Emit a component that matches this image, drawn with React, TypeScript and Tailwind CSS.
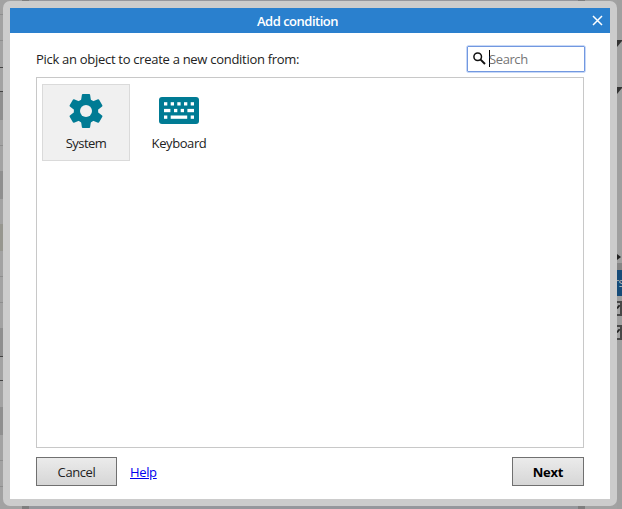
const leftRows: [number, string][] = [
  [14, "bg-[#a2a2a2]"], [1, "bg-[#8e8e8e]"], [25, "bg-[#a2a2a2]"], [1, "bg-[#8e8e8e]"],
  [26, "bg-[#a2a2a2]"], [1, "bg-[#444444]"], [23, "bg-[#a2a2a2]"], [1, "bg-[#444444]"],
  [28, "bg-[#8f8f8f]"], [25, "bg-[#a2a2a2]"], [1, "bg-[#8e8e8e]"], [25, "bg-[#a2a2a2]"],
  [28, "bg-[#8f8f8f]"], [25, "bg-[#a2a2a2]"], [27, "bg-[#96968f]"], [25, "bg-[#a2a2a2]"],
  [1, "bg-[#8e8e8e]"], [25, "bg-[#a2a2a2]"], [1, "bg-[#8e8e8e]"], [25, "bg-[#a2a2a2]"],
  [28, "bg-[#8f8f8f]"], [1, "bg-[#444444]"], [23, "bg-[#a2a2a2]"], [1, "bg-[#444444]"],
  [26, "bg-[#a2a2a2]"], [28, "bg-[#8f8f8f]"], [25, "bg-[#a2a2a2]"], [1, "bg-[#8e8e8e]"],
  [25, "bg-[#a2a2a2]"], [1, "bg-[#8e8e8e]"], [22, "bg-[#a2a2a2]"],
];

function BackdropBar({ className }: { className: string }) {
  return (
    <div className={`flex bg-[#96979c] ${className}`}>
      <div className="w-[19px] bg-[#a2a2a2]" />
      <div className="w-[7px] bg-[#7e7e7e]" />
      <div className="flex-1" />
      <div className="w-[7px] bg-[#7e7e7e]" />
      <div className="w-[32px] bg-[#a2a2a2]" />
    </div>
  );
}

function Corner() {
  return (
    <svg className="block h-[7px] w-[5px] shrink-0" viewBox="0 0 5 7">
      <path d="M0 0H5V1L0 7Z" fill="#333" />
    </svg>
  );
}

function Check() {
  return (
    <svg className="h-[15px] w-[5px] shrink-0" viewBox="0 0 5 15">
      <path d="M0 0H5V15H0Z" fill="#484848" />
      <path d="M0 2H3V13H0Z" fill="#a2a2a2" />
      <path d="M0 7.5L2.6 4.2" stroke="#222" strokeWidth="1.8" />
    </svg>
  );
}

function Gear() {
  return (
    <svg className="mt-[8px] shrink-0" width="36" height="36" viewBox="-18 -18 36 36" fill="#007b94">
      <circle r="12.2" />
      {[0, 60, 120, 180, 240, 300].map((angle) => (
        <path key={angle} transform={`rotate(${angle})`} d="M-3.2 -17H3.2Q4 -17 4.1 -16.2L4.9 -11L7 -8H-7L-4.9 -11L-4.1 -16.2Q-4 -17 -3.2 -17Z" />
      ))}
      <circle r="6" fill="#f0f0f0" />
    </svg>
  );
}

function Keyboard() {
  return (
    <svg className="shrink-0" width="40" height="27" viewBox="0 0 40 27">
      <rect width="40" height="27" rx="3" fill="#007b94" />
      <g fill="#fff">
        {[5, 11.7, 18.3, 25, 31.7].map((x) => (
          <rect key={x} x={x} y="5.2" width="3.3" height="3.3" />
        ))}
        <rect x="5" y="11.9" width="6.4" height="3.3" />
        <rect x="15" y="11.9" width="3.3" height="3.3" />
        <rect x="21.7" y="11.9" width="3.3" height="3.3" />
        <rect x="28.4" y="11.9" width="6.6" height="3.3" />
        <rect x="5" y="18.5" width="3.3" height="3.3" />
        <rect x="11.7" y="18.5" width="16.5" height="3.3" />
        <rect x="31.7" y="18.5" width="3.3" height="3.3" />
      </g>
    </svg>
  );
}

export default function App() {
  return (
    <div className="flex h-[509px] w-[622px] overflow-hidden bg-[#a2a2a2] font-['Open_Sans','Noto_Sans',sans-serif] text-[13px] leading-[18px] text-[#222]">
      <div className="flex w-[3px] shrink-0 flex-col">
        {leftRows.map(([height, color], i) => (
          <div key={i} className={`shrink-0 ${color}`} style={{ height }} />
        ))}
      </div>
      <div className="flex w-[614px] shrink-0 flex-col">
        <BackdropBar className="h-px" />
        <div className="h-[505px] bg-[#a2a2a2]">
          <div className="h-full rounded-[7px] bg-[#cccccc] p-[7px]">
            <div className="flex h-[491px] flex-col bg-white">
              <div className="flex h-[25px] shrink-0 items-center bg-[#2a80ce] text-white">
                <div className="flex-1 text-center font-semibold tracking-[-0.5px]">Add condition</div>
                <svg className="w-[25px]" height="25" viewBox="0 0 25 25">
                  <path d="M8 8L17 17M17 8L8 17" stroke="#fff" strokeWidth="1.5" />
                </svg>
              </div>
              <div className="flex h-[44px] shrink-0 items-start justify-between pl-[26px] pr-[25.5px] pt-[12.5px]">
                <span className="mt-[4.5px] whitespace-nowrap tracking-[-0.29px]">Pick an object to create a new condition from:</span>
                <div className="flex h-[26px] w-[118px] items-center rounded-[1px] border border-[#7298e0] pl-[5px] text-[#757575] ring-[0.5px] ring-[#8fb2f0]">
                  <svg width="13" height="13" viewBox="0 0 13 13" fill="none" stroke="#111" strokeWidth="1.5">
                    <circle cx="4.7" cy="4.7" r="3.8" />
                    <path d="M7.6 7.6L12 12" strokeWidth="2" />
                  </svg>
                  <div className="ml-[3px] h-[17px] w-px bg-black" />
                  <span className="-ml-[0.5px] tracking-[-0.4px]">Search</span>
                </div>
              </div>
              <div className="mx-[26px] flex h-[371px] shrink-0 gap-1 border border-[#c8c8c8] p-[5px] pt-[6px]">
                <div className="flex h-[77px] w-[88px] flex-col items-center border border-[#dadada] bg-[#f0f0f0]">
                  <Gear />
                  <span className="mt-[5px] tracking-[-0.55px]">System</span>
                </div>
                <div className="flex h-[77px] w-[90px] flex-col items-center pt-[13px]">
                  <Keyboard />
                  <span className="mt-[10px] tracking-[-0.4px]">Keyboard</span>
                </div>
              </div>
              <div className="mt-[9px] flex h-[29px] shrink-0 items-center px-[26px]">
                <button className="h-[29px] w-[81px] border border-[#707070] bg-linear-to-b from-[#ebebeb] to-[#d6d6d6] tracking-[-0.4px]">Cancel</button>
                <a className="ml-[13px] text-[#0000ee] underline tracking-[-0.35px]">Help</a>
                <button className="ml-auto h-[29px] w-[72px] border border-[#707070] bg-linear-to-b from-[#ebebeb] to-[#d6d6d6] font-bold tracking-[-0.2px] text-black">Next</button>
              </div>
            </div>
          </div>
        </div>
        <BackdropBar className="h-[3px]" />
      </div>
      <div className="flex w-[5px] shrink-0 flex-col overflow-hidden bg-[#a0a0a0]">
        <div className="h-[40px] shrink-0" />
        <Corner />
        <div className="h-[40px] shrink-0" />
        <Corner />
        <div className="h-[160px] shrink-0" />
        <svg className="h-[6px] w-[5px] shrink-0" viewBox="0 0 5 6"><path d="M0 0L4 3L0 6Z" fill="#222" /></svg>
        <div className="h-[3px] shrink-0" />
        <div className="h-[7px] shrink-0 bg-[#858585]" />
        <div className="h-[26px] shrink-0 overflow-hidden bg-[#164b78] pt-1 text-[12px] text-[#b5b5b5]"><span className="-ml-[3px] tracking-[-0.5px]">rs</span></div>
        <div className="h-[5px] shrink-0" />
        <Check />
        <div className="h-[9px] shrink-0" />
        <Check />
      </div>
    </div>
  );
}
